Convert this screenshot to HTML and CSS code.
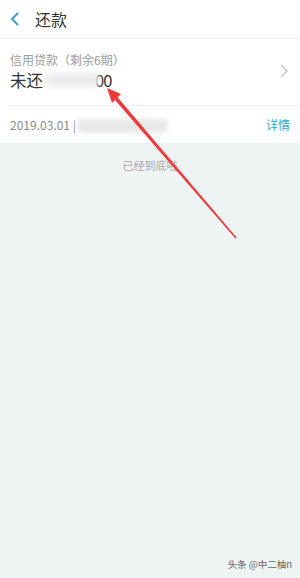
FILE: index.html
```
<!DOCTYPE html>
<html lang="zh">
<head>
<meta charset="utf-8">
<link rel="stylesheet" href="styles.css">
</head>
<body>
<div class="page">
  <header class="bar">
    <svg class="back" width="10" height="14" viewBox="0 0 10 14"><path d="M8 1 L2 7 L8 13" fill="none" stroke="#3d9be6" stroke-width="2"/></svg>
    <span class="title">还款</span>
  </header>
  <section class="card">
    <div class="card-main">
      <div class="sub">信用贷款（剩余6期）</div>
      <div class="amount">未还<span class="blur b1"></span><span class="tail">00</span></div>
    </div>
    <svg class="chev" width="8" height="14" viewBox="0 0 8 14"><path d="M1 1 L7 7 L1 13" fill="none" stroke="#c8c8c8" stroke-width="1.6"/></svg>
  </section>
  <section class="row">
    <div class="date">2019.03.01 | <span class="blur b2"></span></div>
    <a class="detail">详情</a>
  </section>
  <main class="rest">
    <div class="end">已经到底啦</div>
  </main>
  <div class="mark">头条 @中二柚n</div>
  <svg class="arrow" width="300" height="578" viewBox="0 0 300 578">
    <polygon points="112.6,97.3 115.4,94.7 236.6,237.6 235.4,238.4" fill="#f0393a"/>
    <polygon points="107,88 121,94 112,103" fill="#f0393a"/>
  </svg>
</div>
</body>
</html>
```
FILE: styles.css
```
html, body { margin: 0; padding: 0; }
body {
  font-family: "Noto Sans CJK SC", "Noto Sans", sans-serif;
  background: #eef3f4;
}
.page { position: relative; width: 300px; height: 578px; overflow: hidden; display: flex; flex-direction: column; }
.bar {
  height: 39px; background: #fff; border-bottom: 1px solid #ececec;
  display: flex; align-items: center; padding-left: 10px; box-sizing: border-box;
}
.back { margin-right: 15px; margin-top: -1px; }
.title { font-size: 16px; color: #333; }
.card {
  background: #fff; height: 67px; display: flex; align-items: center;
  padding: 0 8px 0 10px; position: relative;
}
.card::after {
  content: ""; position: absolute; left: 8px; right: 0; bottom: 0; height: 1px; background: #efefef;
}
.card-main { flex: 1; padding-bottom: 3px; }
.sub { font-size: 12px; color: #9c9c9c; line-height: 18px; }
.amount { font-size: 16.5px; color: #333; line-height: 22px; display: flex; align-items: center; }
.blur { display: inline-block; background: #ececec; filter: blur(2.5px); }
.b1 { width: 52px; height: 14px; margin: 0 -4px 0 4px; position: relative; z-index: 1; }
.tail { letter-spacing: -1px; }
.b2 { width: 90px; height: 14px; vertical-align: middle; margin-left: -2px; background: #e8e8e8; }
.chev { margin-right: 4px; margin-top: -3px; }
.row {
  background: #fff; height: 37px; display: flex; align-items: center; justify-content: space-between;
  padding: 0 10px;
}
.date { font-size: 12px; color: #8a8a8a; }
.detail { font-size: 12px; color: #2aaed2; }
.rest { flex: 1; }
.end { text-align: center; font-size: 11px; color: #a8a8a8; padding-top: 14px; }
.mark { position: absolute; right: 8px; bottom: 7px; font-size: 9.5px; color: #666; }
.arrow { position: absolute; left: 0; top: 0; pointer-events: none; }
```
